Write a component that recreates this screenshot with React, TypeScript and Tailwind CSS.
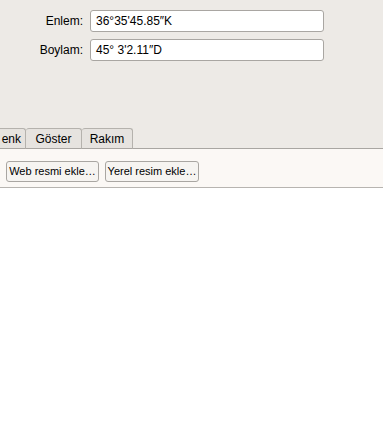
export default function App() {
  const font = { fontFamily: '"Liberation Sans", Arial, sans-serif' };
  return (
    <div className="w-[383px] h-[423px] flex flex-col bg-white text-[12px] text-black overflow-hidden whitespace-nowrap" style={font}>
      {/* coordinate fields */}
      <div className="h-[128px] bg-[#edeae6] pt-[10px] flex flex-col gap-[7px]">
        <div className="flex items-center">
          <span className="w-[84px] text-right pr-[1px]">Enlem:</span>
          <div className="ml-[6px] w-[234px] h-[22px] bg-white border border-[#a9a6a2] rounded-[3px] flex items-center pl-[5px]">
            36°35'45.85″K
          </div>
        </div>
        <div className="flex items-center">
          <span className="w-[84px] text-right pr-[1px]">Boylam:</span>
          <div className="ml-[6px] w-[234px] h-[22px] bg-white border border-[#a9a6a2] rounded-[3px] flex items-center pl-[5px]">
            45° 3'2.11″D
          </div>
        </div>
      </div>

      {/* tabs */}
      <div className="h-[21px] bg-[#edeae6] flex items-end border-b border-[#a9a6a2]">
        <div className="h-[21px] w-[26px] bg-[#e6e3df] border-t border-r border-[#b5b2ad] rounded-tr-[3px] flex items-center justify-end pr-[4px] -mb-px border-b border-b-[#a9a6a2] overflow-hidden">
          enk
        </div>
        <div className="h-[21px] w-[56px] bg-[#e6e3df] border-t border-r border-[#b5b2ad] rounded-t-[3px] flex items-center justify-center -mb-px border-b border-b-[#a9a6a2]">
          Göster
        </div>
        <div className="h-[21px] w-[51px] bg-[#e6e3df] border-t border-r border-[#b5b2ad] rounded-t-[3px] flex items-center justify-center -mb-px border-b border-b-[#a9a6a2]">
          Rakım
        </div>
      </div>

      {/* panel */}
      <div className="h-[39px] bg-[#fbf8f5] border-b border-[#b7b4b0] pt-[12px] pl-[6px] flex gap-[6px] items-start">
        <button className="h-[21px] w-[93px] bg-[#f6f4f1] border border-[#a9a6a2] rounded-[3px] text-[11px] flex items-center justify-center whitespace-nowrap" style={font}>
          Web resmi ekle…
        </button>
        <button className="h-[21px] w-[94px] bg-[#f6f4f1] border border-[#a9a6a2] rounded-[3px] text-[11px] flex items-center justify-center whitespace-nowrap" style={font}>
          Yerel resim ekle…
        </button>
      </div>

      <div className="flex-1 bg-white" />
    </div>
  );
}
